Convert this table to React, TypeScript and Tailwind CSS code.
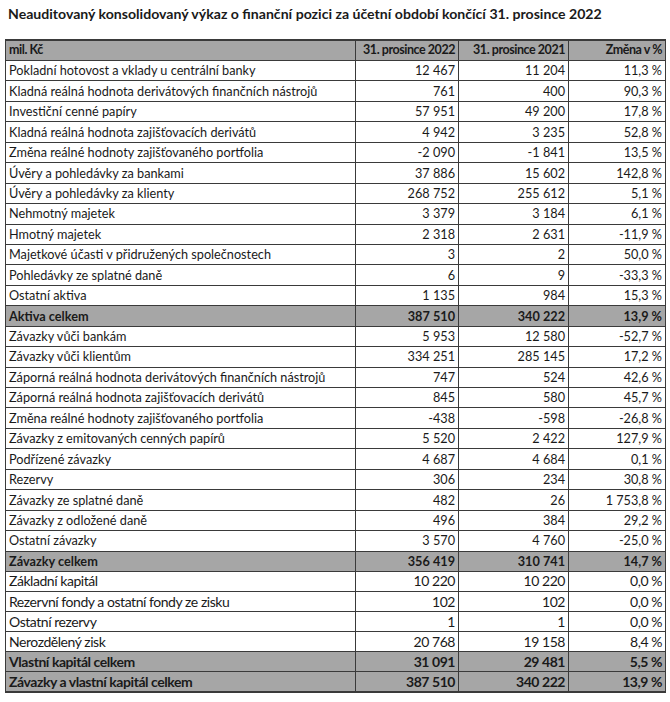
import React from "react";

type Row = { l: string; a: string; b: string; c: string; t?: boolean };

const rows1: Row[] = [
  { l: "Pokladní hotovost a vklady u centrální banky", a: "12 467", b: "11 204", c: "11,3 %" },
  { l: "Kladná reálná hodnota derivátových finančních nástrojů", a: "761", b: "400", c: "90,3 %" },
  { l: "Investiční cenné papíry", a: "57 951", b: "49 200", c: "17,8 %" },
  { l: "Kladná reálná hodnota zajišťovacích derivátů", a: "4 942", b: "3 235", c: "52,8 %" },
  { l: "Změna reálné hodnoty zajišťovaného portfolia", a: "-2 090", b: "-1 841", c: "13,5 %" },
  { l: "Úvěry a pohledávky za bankami", a: "37 886", b: "15 602", c: "142,8 %" },
  { l: "Úvěry a pohledávky za klienty", a: "268 752", b: "255 612", c: "5,1 %" },
  { l: "Nehmotný majetek", a: "3 379", b: "3 184", c: "6,1 %" },
  { l: "Hmotný majetek", a: "2 318", b: "2 631", c: "-11,9 %" },
  { l: "Majetkové účasti v přidružených společnostech", a: "3", b: "2", c: "50,0 %" },
  { l: "Pohledávky ze splatné daně", a: "6", b: "9", c: "-33,3 %" },
  { l: "Ostatní aktiva", a: "1 135", b: "984", c: "15,3 %" },
  { l: "Aktiva celkem", a: "387 510", b: "340 222", c: "13,9 %", t: true },
  { l: "Závazky vůči bankám", a: "5 953", b: "12 580", c: "-52,7 %" },
  { l: "Závazky vůči klientům", a: "334 251", b: "285 145", c: "17,2 %" },
  { l: "Záporná reálná hodnota derivátových finančních nástrojů", a: "747", b: "524", c: "42,6 %" },
  { l: "Záporná reálná hodnota zajišťovacích derivátů", a: "845", b: "580", c: "45,7 %" },
  { l: "Změna reálné hodnoty zajišťovaného portfolia", a: "-438", b: "-598", c: "-26,8 %" },
  { l: "Závazky z emitovaných cenných papírů", a: "5 520", b: "2 422", c: "127,9 %" },
  { l: "Podřízené závazky", a: "4 687", b: "4 684", c: "0,1 %" },
  { l: "Rezervy", a: "306", b: "234", c: "30,8 %" },
  { l: "Závazky ze splatné daně", a: "482", b: "26", c: "1 753,8 %" },
  { l: "Závazky z odložené daně", a: "496", b: "384", c: "29,2 %" },
  { l: "Ostatní závazky", a: "3 570", b: "4 760", c: "-25,0 %" },
  { l: "Závazky celkem", a: "356 419", b: "310 741", c: "14,7 %", t: true },
];

const rows2: Row[] = [
  { l: "Základní kapitál", a: "10 220", b: "10 220", c: "0,0 %" },
  { l: "Rezervní fondy a ostatní fondy ze zisku", a: "102", b: "102", c: "0,0 %" },
  { l: "Ostatní rezervy", a: "1", b: "1", c: "0,0 %" },
  { l: "Nerozdělený zisk", a: "20 768", b: "19 158", c: "8,4 %" },
  { l: "Vlastní kapitál celkem", a: "31 091", b: "29 481", c: "5,5 %", t: true },
  { l: "Závazky a vlastní kapitál celkem", a: "387 510", b: "340 222", c: "13,9 %", t: true },
];

function R({ r, big }: { r: Row; big?: boolean }) {
  const bg = r.t ? "bg-[#a6a6a6] font-bold" : "bg-white";
  const size = big
    ? "text-[14px] tracking-[-0.45px] h-[20.1px]"
    : "text-[12.7px] h-[20.45px]";
  const cell = "border border-[#3a3a3a] px-[3px] py-0 leading-none whitespace-nowrap";
  return (
    <tr className={`${bg} ${size}`}>
      <td className={`${cell} text-left`}>{r.l}</td>
      <td className={`${cell} text-right`}>{r.a}</td>
      <td className={`${cell} text-right`}>{r.b}</td>
      <td className={`${cell} text-right`}>{r.c}</td>
    </tr>
  );
}

export default function App() {
  const hc = "border border-[#3a3a3a] px-[3px] leading-none whitespace-nowrap";
  return (
    <div
      className="w-[670px] h-[702px] bg-white text-[#1a1a1a] pt-[4px]"
      style={{ fontFamily: "Lato, 'Open Sans', sans-serif" }}
    >
      <div className="pl-[8px] text-[14.1px] font-bold h-[35px] leading-[18px] pt-[1px] whitespace-nowrap">
        Neauditovaný konsolidovaný výkaz o finanční pozici za účetní období končící 31. prosince 2022
      </div>
      <table className="ml-[5px] w-[660px] border-collapse table-fixed border-y-2 border-[#3a3a3a]">
        <colgroup>
          <col className="w-[350px]" />
          <col className="w-[103px]" />
          <col className="w-[110px]" />
          <col className="w-[97px]" />
        </colgroup>
        <tbody>
          <tr className="bg-[#a6a6a6] font-bold text-[12.5px] tracking-[-0.45px] h-[20.5px]">
            <td className={`${hc} text-left`}>mil. Kč</td>
            <td className={`${hc} text-right`}>31. prosince 2022</td>
            <td className={`${hc} text-right`}>31. prosince 2021</td>
            <td className={`${hc} text-right`}>Změna v %</td>
          </tr>
          {rows1.map((r, i) => (
            <R key={i} r={r} />
          ))}
          {rows2.map((r, i) => (
            <R key={"b" + i} r={r} big />
          ))}
        </tbody>
      </table>
    </div>
  );
}
